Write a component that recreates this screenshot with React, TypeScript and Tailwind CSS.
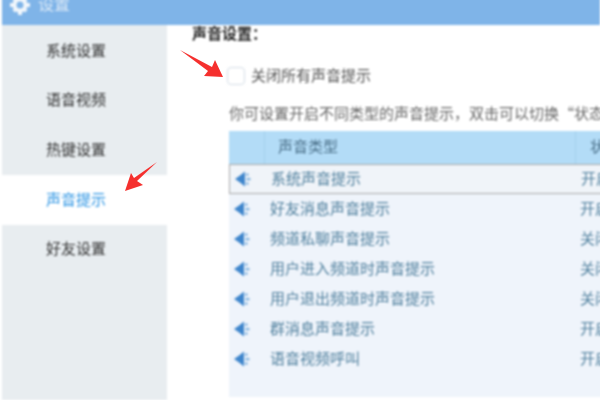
const font = 'font-["Liberation_Sans","Noto_Sans_CJK_SC",sans-serif]'

const navItems = ['系统设置', '语音视频', '热键设置', '声音提示', '好友设置']

const sounds = [
  { name: '系统声音提示', status: '开启', selected: true },
  { name: '好友消息声音提示', status: '开启' },
  { name: '频道私聊声音提示', status: '关闭' },
  { name: '用户进入频道时声音提示', status: '关闭' },
  { name: '用户退出频道时声音提示', status: '关闭' },
  { name: '群消息声音提示', status: '开启' },
  { name: '语音视频呼叫', status: '开启' },
]

function SpeakerIcon() {
  return (
    <svg width="16" height="16" viewBox="0 0 16 16" className="shrink-0">
      <path d="M0 8 L5 4.5 L10 0.5 V15.5 L5 11.5 Z" fill="#3f86cc" />
      <rect x="11" y="2.5" width="2.5" height="2.2" fill="#7db0de" />
      <rect x="11.5" y="7" width="4" height="2.2" fill="#7db0de" />
      <rect x="11" y="11.5" width="2.5" height="2.2" fill="#7db0de" />
    </svg>
  )
}

function GearIcon() {
  return (
    <svg width="20" height="20" viewBox="0 0 20 20" className="shrink-0">
      <circle cx="10" cy="10" r="5.5" fill="none" stroke="#f2f7fc" strokeWidth="4" />
      <path
        d="M8 0h4v3H8zM8 17h4v3H8zM0 8h3v4H0zM17 8h3v4h-3zM2.5 5 5 2.5 7 4.5 4.5 7zM15 2.5 17.5 5 15.5 7 13 4.5zM2.5 15 5 17.5 7 15.5 4.5 13zM17.5 15 15 17.5 13 15.5 15.5 13z"
        fill="#f2f7fc"
      />
    </svg>
  )
}

export default function App() {
  return (
    <div className={`relative h-[400px] w-[600px] overflow-hidden bg-white pl-0.5 ${font}`}>
      <div className="flex h-full flex-col blur-[1px]">
        <div className="-mt-[15px] flex h-[40px] shrink-0 items-center gap-2 bg-[#7fb4e8] pl-2 text-[16px] text-[#dbe9f7]">
          <GearIcon />
          <span>设置</span>
        </div>

        <div className="flex min-h-0 flex-1">
          <div className="flex w-[165px] shrink-0 flex-col bg-[#e8edf0] pt-px">
            {navItems.map((item, i) => (
              <div
                key={item}
                className={`flex h-[49.7px] items-center pl-[44px] text-[15px] ${
                  i === 3 ? 'bg-white text-[#2f96e4]' : 'text-[#333]'
                }`}
              >
                {item}
              </div>
            ))}
          </div>

          <div className="min-w-0 flex-1 pl-[25px]">
            <h1 className="mt-[-1px] h-[20px] text-[15px] leading-[20px] font-bold text-[#222]">
              声音设置{'\uFF1A'}
            </h1>
            <div className="mt-[23px] ml-[35px] flex h-[18px] items-center gap-1.5">
              <span className="h-[18px] w-[18px] rounded-sm border border-[#d4dde6] bg-white" />
              <span className="text-[15px] whitespace-nowrap text-[#555]">关闭所有声音提示</span>
            </div>
            <p className='mt-[18px] ml-[37px] h-[20px] font-["Noto_Sans_CJK_SC",sans-serif] text-[15px] leading-[20px] whitespace-nowrap text-[#666]'>
              你可设置开启不同类型的声音提示{'\uFF0C'}双击可以切换“状态”
            </p>

            <div className="mt-[8px] ml-[37px] h-[266px] w-[380px] bg-[#eff4fb]">
              <div className="flex h-[33px] items-center bg-[#b3dcf7] text-[15px] text-[#4a6f88]">
                <div className="flex h-full w-[36px] shrink-0 border-r border-[#a5cfeb]" />
                <div className="flex h-full w-[311px] shrink-0 items-center border-r border-[#a5cfeb] pl-[13px]">
                  声音类型
                </div>
                <div className="shrink-0 pl-[14px] whitespace-nowrap">状态</div>
              </div>
              {sounds.map((s) => (
                <div
                  key={s.name}
                  className={`flex h-[30px] items-center text-[15px] whitespace-nowrap text-[#50809e] ${
                    s.selected ? 'border-y border-l border-[#a8a8a8] bg-[#f0f4f9]' : ''
                  }`}
                >
                  <div className="ml-[5px] flex w-[36px] shrink-0 items-center">
                    <SpeakerIcon />
                  </div>
                  <div className="w-[310px] shrink-0">{s.name}</div>
                  <div>{s.status}</div>
                </div>
              ))}
            </div>
          </div>
        </div>
      </div>

      {/* red annotation arrows */}
      <svg width="46" height="32" viewBox="0 0 46 32" className="absolute top-[48px] left-[179px] blur-[0.5px]">
        <path d="M1 2 L33 19 L36 12 L44 29 L25 28 L29 23 Z" fill="#f5302e" />
      </svg>
      <svg width="34" height="32" viewBox="0 0 34 32" className="absolute top-[161px] left-[124px] blur-[0.5px]">
        <path d="M33 1 L13 20 L19 24 L1 30 L7 12 L10 17 Z" fill="#f5302e" />
      </svg>
    </div>
  )
}
